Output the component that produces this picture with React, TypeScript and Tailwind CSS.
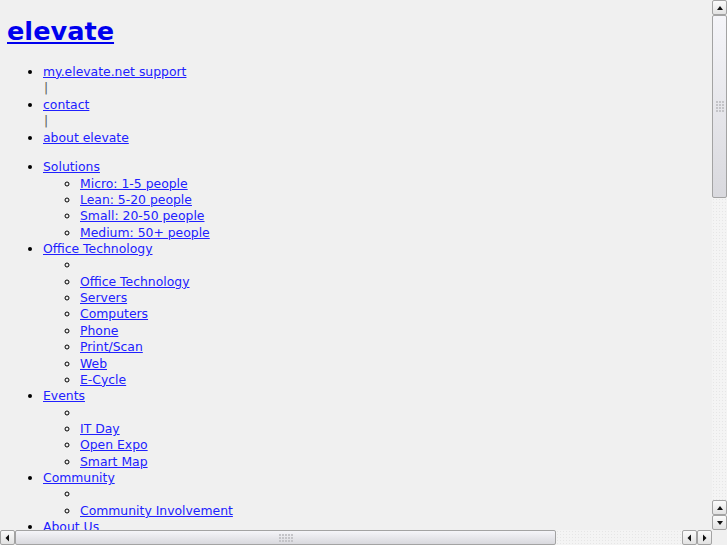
import React from 'react';

const link = 'text-[#2020ff] underline';

const Arrow = ({ dir }: { dir: 'up' | 'down' | 'left' | 'right' }) => {
  const pts = {
    up: '1,5 4,1 7,5',
    down: '1,1 4,5 7,1',
    left: '5,0.5 1.5,4 5,7.5',
    right: '2,0.5 5.5,4 2,7.5',
  }[dir];
  const vert = dir === 'up' || dir === 'down';
  return (
    <svg width={vert ? 8 : 7} height={vert ? 6 : 8} viewBox={vert ? '0 0 8 6' : '0 0 7 8'}>
      <polygon points={pts} fill="#111" />
    </svg>
  );
};

const SbButton = ({ dir }: { dir: 'up' | 'down' | 'left' | 'right' }) => (
  <div className="w-[15px] h-[15px] shrink-0 flex items-center justify-center rounded-[2px] border border-[#a3a3a3] bg-gradient-to-b from-[#fbfbfb] to-[#e2e2e2]">
    <Arrow dir={dir} />
  </div>
);

const Grip = ({ cols, rows }: { cols: number; rows: number }) => (
  <div className="grid gap-[1px]" style={{ gridTemplateColumns: `repeat(${cols}, 2px)` }}>
    {Array.from({ length: cols * rows }).map((_, i) => (
      <div key={i} className="w-[2px] h-[2px] bg-[#c4c4c8]" />
    ))}
  </div>
);

const track =
  'bg-[#f4f4f4] bg-[radial-gradient(#e6e6e6_0.6px,transparent_0.8px)] bg-[length:3px_3px]';

const VScroll = () => (
  <div className="w-[15px] shrink-0 flex flex-col">
    <SbButton dir="up" />
    <div className="h-[183px] shrink-0 rounded-[2px] border border-[#a3a3a3] bg-gradient-to-b from-[#f5f5f9] to-[#d9d9de] flex items-center justify-center">
      <Grip cols={3} rows={4} />
    </div>
    <div className={`flex-1 ${track}`} />
    <SbButton dir="up" />
    <SbButton dir="down" />
  </div>
);

const HScroll = () => (
  <div className="h-[15px] flex">
    <div className="flex-1 flex">
      <SbButton dir="left" />
      <div className="w-[541px] shrink-0 rounded-[2px] border border-[#a3a3a3] bg-gradient-to-b from-[#f5f5f9] to-[#d9d9de] flex items-center justify-center">
        <Grip cols={5} rows={3} />
      </div>
      <div className={`flex-1 ${track}`} />
      <SbButton dir="left" />
      <SbButton dir="right" />
    </div>
    <div className="w-[15px] bg-[#f0f0f0]" />
  </div>
);

const menu = [
  {
    title: 'Solutions',
    items: ['Micro: 1-5 people', 'Lean: 5-20 people', 'Small: 20-50 people', 'Medium: 50+ people'],
  },
  {
    title: 'Office Technology',
    items: ['', 'Office Technology', 'Servers', 'Computers', 'Phone', 'Print/Scan', 'Web', 'E-Cycle'],
  },
  { title: 'Events', items: ['', 'IT Day', 'Open Expo', 'Smart Map'] },
  { title: 'Community', items: ['', 'Community Involvement'] },
  { title: 'About Us', items: [] as string[] },
];

export default function App() {
  return (
    <div className="w-[727px] h-[545px] flex flex-col overflow-hidden bg-[#f0f0f0] text-black font-['DejaVu_Sans',sans-serif] text-[12.4px] leading-[16.36px]">
      <div className="flex flex-1 min-h-0">
        <div className="flex-1 overflow-hidden pl-[7px] whitespace-nowrap">
          <h1 className="mt-[16px] mb-[17.7px] text-[25.6px] leading-[30px] font-bold">
            <a className="text-[#0000ee] underline" href="#">elevate</a>
          </h1>
          <ul className="list-disc pl-[36px] leading-[16.5px]">
            <li><a className={link} href="#">my.elevate.net support</a></li>
            <div className="text-[#555] pl-[1px]">|</div>
            <li><a className={link} href="#">contact</a></li>
            <div className="text-[#555] pl-[1px]">|</div>
            <li><a className={link} href="#">about elevate</a></li>
          </ul>
          <ul className="list-disc pl-[36px] mt-[13px]">
            {menu.map((m) => (
              <li key={m.title}>
                <a className={link} href="#">{m.title}</a>
                {m.items.length > 0 && (
                  <ul className="list-[circle] pl-[37px]">
                    {m.items.map((it, i) => (
                      <li key={i}>{it ? <a className={link} href="#">{it}</a> : '\u00a0'}</li>
                    ))}
                  </ul>
                )}
              </li>
            ))}
          </ul>
        </div>
        <VScroll />
      </div>
      <HScroll />
    </div>
  );
}
